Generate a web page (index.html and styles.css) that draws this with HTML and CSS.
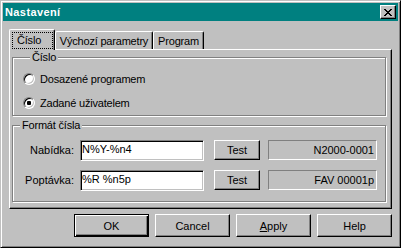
FILE: index.html
```html
<!DOCTYPE html>
<html lang="cs">
<head>
<meta charset="UTF-8">
<title>Nastavení</title>
<link rel="stylesheet" href="styles.css">
</head>
<body>

<div class="window">
    <div class="titlebar">
        <span class="title">Nastavení</span>
        <div class="close">
            <svg width="8" height="7" viewBox="0 0 8 7" shape-rendering="crispEdges">
                <path fill="#000" d="M0 0h2v1h-2zM6 0h2v1h-2zM1 1h2v1h-2zM5 1h2v1h-2zM2 2h4v1h-4zM3 3h2v1h-2zM2 4h4v1h-4zM1 5h2v1h-2zM5 5h2v1h-2zM0 6h2v1h-2zM6 6h2v1h-2z"/>
            </svg>
        </div>
    </div>

    <div class="client">
        <div class="tabs">
            <div class="tab active"><span class="focus">Číslo</span></div>
            <div class="tab tab-defaults">Výchozí parametry</div>
            <div class="tab tab-program">Program</div>
        </div>

        <div class="panel">
            <fieldset class="group group-number">
                <legend>Číslo</legend>
                <div class="radio-row"><span class="radio"></span>Dosazené programem</div>
                <div class="radio-row"><span class="radio checked"></span>Zadané uživatelem</div>
            </fieldset>

            <fieldset class="group group-format">
                <legend>Formát čísla</legend>
                <div class="format-row">
                    <span class="field-label">Nabídka:</span>
                    <div class="edit">N%Y-%n4</div>
                    <div class="btn btn-test">Test</div>
                    <div class="output">N2000-0001</div>
                </div>
                <div class="format-row">
                    <span class="field-label">Poptávka:</span>
                    <div class="edit">%R %n5p</div>
                    <div class="btn btn-test">Test</div>
                    <div class="output">FAV 00001p</div>
                </div>
            </fieldset>
        </div>

        <div class="buttons">
            <div class="btn btn-dialog btn-default">OK</div>
            <div class="btn btn-dialog">Cancel</div>
            <div class="btn btn-dialog"><u>A</u>pply</div>
            <div class="btn btn-dialog">Help</div>
        </div>
    </div>
</div>

</body>
</html>
```

FILE: styles.css
```css
* {
    box-sizing: border-box;
}
body {
    margin: 0;
    background: #c0c0c0;
    font-family: "Liberation Sans", Arial, sans-serif;
    font-size: 11px;
    color: #000;
}
.window {
    width: 401px;
    height: 248px;
    display: flex;
    flex-direction: column;
    padding: 2px;
    background: #c0c0c0;
    border: 1px solid;
    border-color: #c0c0c0 #000 #000 #c0c0c0;
    box-shadow: inset 1px 1px #fff, inset -1px -1px #808080;
}

/* title bar */
.titlebar {
    height: 18px;
    display: flex;
    align-items: center;
    justify-content: space-between;
    padding: 0 2px 0 2px;
    background: #008080;
}
.title {
    color: #fff;
    font-weight: bold;
    letter-spacing: 0.4px;
}
.close {
    width: 16px;
    height: 14px;
    display: flex;
    align-items: center;
    justify-content: center;
    background: #c0c0c0;
    border: 1px solid;
    border-color: #fff #000 #000 #fff;
    box-shadow: inset -1px -1px #808080;
}
.close svg {
    display: block;
}

.client {
    flex: 1;
    display: flex;
    flex-direction: column;
    padding: 8px 6px 0;
}

/* tabs */
.tabs {
    height: 20px;
    display: flex;
    align-items: flex-end;
    padding-left: 2px;
}
.tab {
    height: 18px;
    padding-top: 3px;
    line-height: 13px;
    text-align: center;
    letter-spacing: -0.2px;
    background: #c0c0c0;
    border: 1px solid;
    border-bottom: none;
    border-color: #fff #000 #000 #fff;
    border-radius: 2px 2px 0 0;
    box-shadow: inset -1px 0 #808080;
}
.tab.active {
    position: relative;
    z-index: 1;
    width: 46px;
    height: 21px;
    margin: 0 0 -1px -2px;
    padding: 2px 1px 0 2px;
    text-align: left;
}
.tab-defaults {
    width: 98px;
}
.tab-program {
    width: 51px;
}
.focus {
    display: block;
    height: 17px;
    padding: 1px 0 0 4px;
    border: 1px dotted #000;
}

.panel {
    height: 160px;
    padding: 1px 5px 0 2px;
    border: 1px solid;
    border-color: #fff #000 #000 #fff;
    box-shadow: inset -1px -1px #808080;
}

/* group boxes */
.group {
    margin: 0;
    padding: 0;
    min-width: 0;
    border: 1px solid #808080;
    box-shadow: inset 1px 1px #fff, 1px 1px #fff;
}
.group legend {
    margin-left: 7px;
    padding: 0 2px;
    line-height: 13px;
    background: #c0c0c0;
    letter-spacing: -0.2px;
}
.group-number {
    padding: 3px 0 0 10px;
}
.group-format {
    margin-top: 3px;
    padding: 8px 0 10px 0;
}

.radio-row {
    height: 24px;
    display: flex;
    align-items: center;
    letter-spacing: -0.2px;
}
.radio {
    width: 12px;
    height: 12px;
    margin-right: 5px;
    display: flex;
    align-items: center;
    justify-content: center;
    border-radius: 50%;
    background: #fff;
    border: 1px solid;
    border-color: #808080 #fff #fff #808080;
    box-shadow: inset 1px 1px #000, inset -1px -1px #c0c0c0;
}
.radio.checked::after {
    content: "";
    width: 4px;
    height: 4px;
    border-radius: 1px;
    background: #000;
}

.format-row {
    display: flex;
    align-items: flex-start;
    line-height: 20px;
}
.format-row + .format-row {
    margin-top: 9px;
}
.field-label {
    width: 61px;
    text-align: right;
    line-height: 21px;
}
.edit {
    width: 124px;
    height: 21px;
    margin-left: 6px;
    padding-left: 1px;
    line-height: 17px;
    background: #fff;
    border: 1px solid;
    border-color: #808080 #fff #fff #808080;
    box-shadow: inset 1px 1px #000, inset -1px -1px #c0c0c0;
}
.output {
    width: 109px;
    height: 20px;
    margin-left: 8px;
    padding-right: 2px;
    text-align: right;
    line-height: 18px;
    border: 1px solid;
    border-color: #808080 #fff #fff #808080;
}

/* push buttons */
.btn {
    display: flex;
    align-items: center;
    justify-content: center;
    background: #c0c0c0;
    border: 1px solid;
    border-color: #fff #000 #000 #fff;
    box-shadow: inset -1px -1px #808080;
}
.btn-test {
    width: 46px;
    height: 20px;
    margin-left: 10px;
}
.buttons {
    display: flex;
    justify-content: flex-end;
    gap: 6px;
    margin-top: 5px;
}
.btn-dialog {
    width: 75px;
    height: 23px;
}
.btn-default {
    border-color: #000;
    box-shadow: inset 1px 1px #fff, inset -1px -1px #000, inset -2px -2px #808080;
}
```
